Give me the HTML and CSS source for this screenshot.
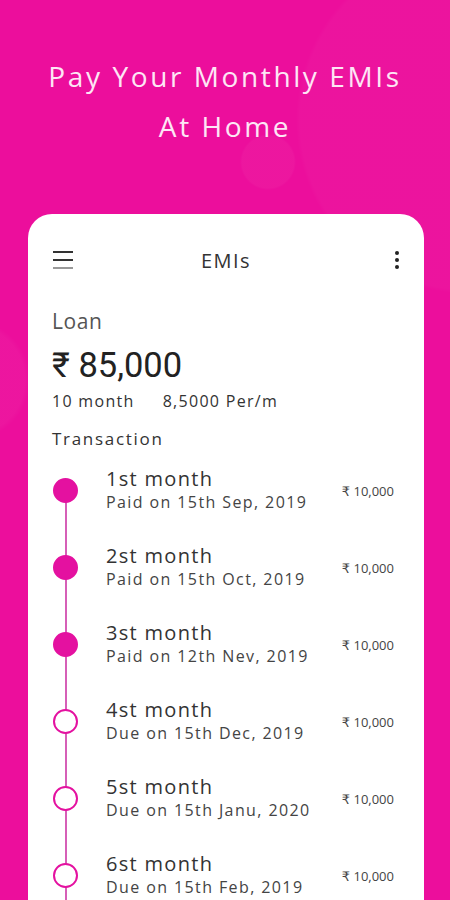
FILE: index.html
```html
<!DOCTYPE html>
<html lang="en">

<head>
    <meta charset="UTF-8">
    <meta name="viewport" content="width=device-width, initial-scale=1.0">
    <title>EMIs</title>

    <link rel="stylesheet" href="styles.css">

</head>

<body>

    <section id="appContainer">

        <h1 class="promo">Pay Your Monthly EMIs<br>At Home</h1>

        <div class="card">

            <div class="topBar">
                <span class="menuIcon"><i></i><i></i><i class="light"></i></span>
                <strong class="title">EMIs</strong>
                <span class="moreIcon"><i></i><i></i><i></i></span>
            </div>

            <div class="loan">
                <div class="loanLabel">Loan</div>
                <div class="loanAmount">₹ 85,000</div>
                <div class="loanInfo"><span>10 month</span><span>8,5000 Per/m</span></div>
            </div>

            <div class="sectionTitle">Transaction</div>

            <ul class="timeline">
                <li class="step paid">
                    <div class="rail"><b class="dot"></b></div>
                    <div class="stepText">
                        <div class="stepName">1st month</div>
                        <div class="stepDate">Paid on 15th Sep, 2019</div>
                    </div>
                    <div class="stepAmount">₹ 10,000</div>
                </li>
                <li class="step paid">
                    <div class="rail"><b class="dot"></b></div>
                    <div class="stepText">
                        <div class="stepName">2st month</div>
                        <div class="stepDate">Paid on 15th Oct, 2019</div>
                    </div>
                    <div class="stepAmount">₹ 10,000</div>
                </li>
                <li class="step paid">
                    <div class="rail"><b class="dot"></b></div>
                    <div class="stepText">
                        <div class="stepName">3st month</div>
                        <div class="stepDate">Paid on 12th Nev, 2019</div>
                    </div>
                    <div class="stepAmount">₹ 10,000</div>
                </li>
                <li class="step">
                    <div class="rail"><b class="dot"></b></div>
                    <div class="stepText">
                        <div class="stepName">4st month</div>
                        <div class="stepDate">Due on 15th Dec, 2019</div>
                    </div>
                    <div class="stepAmount">₹ 10,000</div>
                </li>
                <li class="step">
                    <div class="rail"><b class="dot"></b></div>
                    <div class="stepText">
                        <div class="stepName">5st month</div>
                        <div class="stepDate">Due on 15th Janu, 2020</div>
                    </div>
                    <div class="stepAmount">₹ 10,000</div>
                </li>
                <li class="step">
                    <div class="rail"><b class="dot"></b></div>
                    <div class="stepText">
                        <div class="stepName">6st month</div>
                        <div class="stepDate">Due on 15th Feb, 2019</div>
                    </div>
                    <div class="stepAmount">₹ 10,000</div>
                </li>
            </ul>

        </div>

    </section>

</body>

</html>
```

FILE: styles.css
```css
body {
    margin: 0;
    height: 900px;
    overflow: hidden;
    font-family: "Open Sans", "DejaVu Sans", sans-serif;
    background-color: #ec0e9c;
    background-image:
        radial-gradient(circle at 268px 162px, rgba(255, 255, 255, 0.035) 26px, rgba(255, 255, 255, 0) 28px),
        radial-gradient(circle at 470px 120px, rgba(255, 255, 255, 0.025) 170px, rgba(255, 255, 255, 0) 174px),
        radial-gradient(circle at -30px 380px, rgba(255, 255, 255, 0.03) 55px, rgba(255, 255, 255, 0) 60px);
}

#appContainer {
    width: 450px;
}

.promo {
    margin: 51px 0 0;
    font-size: 28px;
    font-weight: 400;
    line-height: 50px;
    letter-spacing: 2.6px;
    text-align: center;
    color: #fde6f5;
}

.card {
    margin: 63px 26px 0 28px;
    height: 720px;
    padding: 30px 30px 0 24px;
    background: #fff;
    border-radius: 24px 24px 0 0;
}

.topBar {
    display: grid;
    grid-template-columns: 1fr auto 1fr;
    align-items: center;
    height: 32px;
}

.menuIcon {
    display: flex;
    flex-direction: column;
    gap: 6px;
    width: 20px;
    margin-left: 1px;
}

.menuIcon i {
    display: block;
    height: 2px;
    background: #333;
}

.menuIcon i.light {
    background: #999;
}

.title {
    margin-left: 6px;
    font-size: 20px;
    font-weight: 400;
    color: #333;
    letter-spacing: 1.5px;
}

.moreIcon {
    display: flex;
    flex-direction: column;
    justify-self: end;
    gap: 3px;
    margin-right: -5px;
}

.moreIcon i {
    display: block;
    width: 4px;
    height: 4px;
    border-radius: 50%;
    background: #222;
}

.loan {
    margin-top: 32px;
}

.loanLabel {
    font-size: 21px;
    line-height: 26px;
    color: #555;
    letter-spacing: 0.6px;
}

.loanAmount {
    margin-top: 11px;
    font-family: Roboto, "Liberation Sans", sans-serif;
    font-size: 34.5px;
    line-height: 40px;
    color: #222;
}

.loanInfo {
    display: flex;
    gap: 28px;
    margin-top: 6px;
    font-size: 16px;
    line-height: 20px;
    color: #333;
    letter-spacing: 1.3px;
}

.sectionTitle {
    margin-top: 18px;
    font-size: 17px;
    line-height: 20px;
    color: #333;
    letter-spacing: 1.7px;
}

.timeline {
    list-style: none;
    margin: 3px 0 0;
    padding: 0;
}

.step {
    display: flex;
    align-items: center;
    height: 77px;
}

.rail {
    position: relative;
    display: flex;
    align-items: center;
    justify-content: center;
    width: 25px;
    height: 100%;
    margin-left: 1px;
}

.rail::before {
    content: "";
    position: absolute;
    left: 11.5px;
    top: 0;
    bottom: 0;
    width: 2px;
    background: #d65fb7;
}

.step:first-child .rail::before {
    top: 50%;
}

.dot {
    position: relative;
    box-sizing: border-box;
    width: 25px;
    height: 25px;
    border-radius: 50%;
    border: 2px solid #e411a0;
    background: #fff;
}

.step.paid .dot {
    background: #e411a0;
}

.stepText {
    flex: 1;
    margin-left: 28px;
}

.stepName {
    margin-top: -3px;
    font-size: 20px;
    line-height: 26px;
    color: #333;
    letter-spacing: 1.3px;
}

.stepDate {
    font-size: 16px;
    line-height: 20px;
    color: #444;
    letter-spacing: 1.4px;
}

.stepAmount {
    font-size: 13px;
    color: #444;
}
```
